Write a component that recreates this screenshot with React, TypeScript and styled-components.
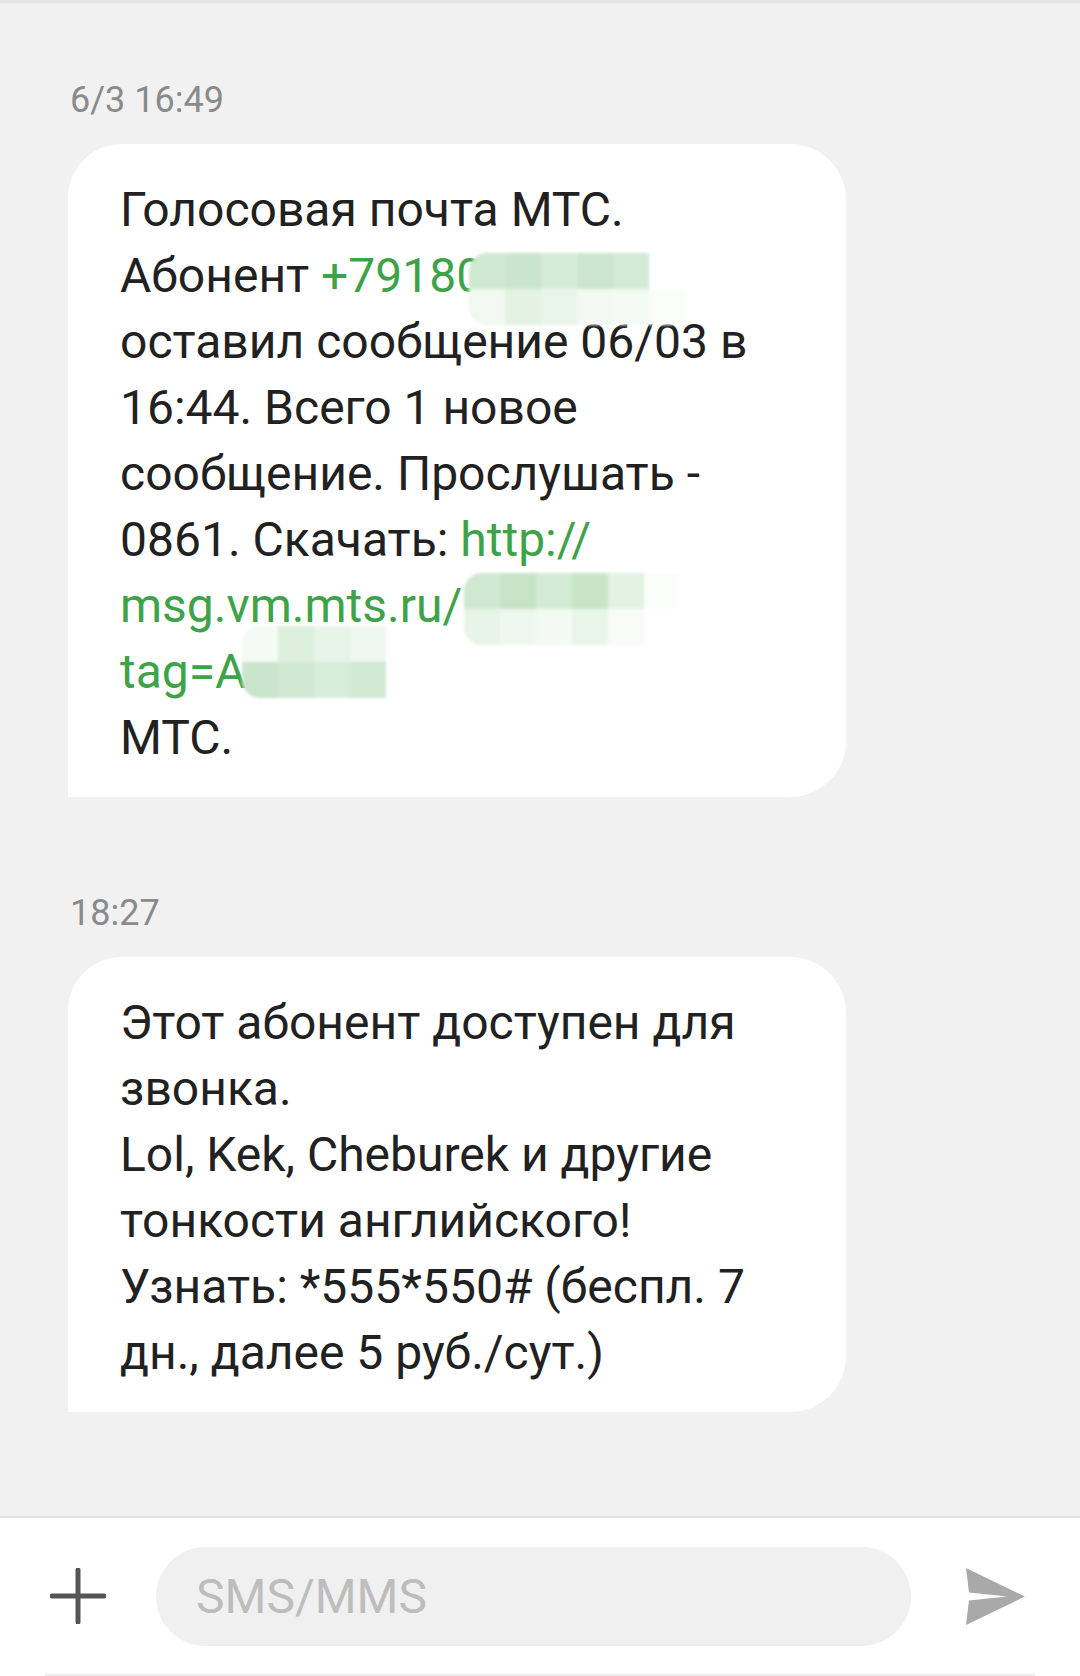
import React from 'react';
import styled, { createGlobalStyle } from 'styled-components';

const GlobalStyle = createGlobalStyle`
  html, body {
    margin: 0;
    padding: 0;
    background: #f1f1f1;
  }
  body {
    font-family: Roboto, "Noto Sans", "Liberation Sans", sans-serif;
  }
`;

const Screen = styled.div`
  width: 1080px;
  height: 1676px;
  display: flex;
  flex-direction: column;
  border-top: 3px solid #e4e4e4;
  box-sizing: border-box;
  background: #f1f1f1;
`;

const Thread = styled.div`
  flex: 1;
  display: flex;
  flex-direction: column;
  padding: 79px 0 0 68px;
`;

const Stamp = styled.div<{ $gapTop?: number }>`
  margin-top: ${p => p.$gapTop || 0}px;
  padding-left: 2px;
  font-size: 36px;
  line-height: 36px;
  color: #8a8a8a;
`;

const Bubble = styled.div`
  margin-top: 26px;
  width: 778px;
  box-sizing: border-box;
  padding: 33px 20px 26px 52px;
  background: #fff;
  border-radius: 54px 56px 56px 0;
  font-size: 48px;
  line-height: 66px;
  color: #212121;
`;

const Line = styled.div`
  white-space: nowrap;
  height: 66px;
`;

const Link = styled.span`
  color: #3ea348;
`;

const Censor = styled.span<{ $cols: number; $shift: number; $drop: number }>`
  display: inline-grid;
  grid-template-columns: repeat(${p => p.$cols}, 36px);
  grid-auto-rows: 36px;
  vertical-align: top;
  position: relative;
  top: ${p => p.$drop}px;
  margin-left: ${p => p.$shift}px;
  margin-bottom: -40px;
  filter: blur(1.5px);
  border-radius: 18px 4px 14px 18px;
  overflow: hidden;
`;

const Cell = styled.span<{ $c: string }>`
  background: ${p => p.$c};
`;

const BottomBar = styled.div`
  height: 160px;
  flex-shrink: 0;
  background: #fff;
  border-top: 2px solid #e2e2e2;
  box-sizing: border-box;
  display: flex;
  align-items: center;
`;

const Composer = styled.div`
  flex: 1;
  display: flex;
  align-items: center;
  height: 100%;
  margin: 0 45px;
  border-bottom: 2px solid #ececec;
  box-sizing: border-box;
`;

const IconButton = styled.div<{ $w: number; $pad?: number }>`
  width: ${p => p.$w}px;
  padding-left: ${p => p.$pad || 0}px;
  box-sizing: border-box;
  display: flex;
  align-items: center;
  justify-content: ${p => (p.$pad ? 'flex-start' : 'center')};
  flex-shrink: 0;
`;

const Field = styled.div`
  flex: 1;
  height: 99px;
  margin-left: 45px;
  border-radius: 50px;
  background: #f0f0f0;
  display: flex;
  align-items: center;
  padding-left: 40px;
  font-size: 48px;
  color: #bdbdbd;
`;

const mosaic = (colors: string[]) => colors.map((c, i) => <Cell key={i} $c={c} />);

const App: React.FC = () => {
  return (
    <Screen>
      <GlobalStyle />
      <Thread>
        <Stamp>6/3 16:49</Stamp>
        <Bubble>
          <Line>Голосовая почта МТС.</Line>
          <Line>
            Абонент <Link>+79180</Link>
            <Censor $cols={6} $shift={-14} $drop={10}>
              {mosaic([
                '#cfe8d0', '#c9e5cb', '#d6ecd7', '#cbe6cc', '#d3ead4', '#ffffff',
                '#f0f8f0', '#e4f2e4', '#eaf5ea', '#f2f9f2', '#f4faf4', '#fafdfa',
              ])}
            </Censor>
          </Line>
          <Line>оставил сообщение 06/03 в</Line>
          <Line>16:44. Всего 1 новое</Line>
          <Line>сообщение. Прослушать -</Line>
          <Line>
            0861. Скачать: <Link>http://</Link>
          </Line>
          <Line>
            <Link>msg.vm.mts.ru/</Link>
            <Censor $cols={6} $shift={2} $drop={0}>
              {mosaic([
                '#cfe8d0', '#c6e3c8', '#d3ebd4', '#c8e4c9', '#e3f1e3', '#fbfdfb',
                '#e8f4e8', '#eef7ee', '#f3f9f3', '#e9f5e9', '#f8fbf8', '#ffffff',
              ])}
            </Censor>
          </Line>
          <Line>
            <Link>tag=A</Link>
            <Censor $cols={5} $shift={-4} $drop={-13}>
              {mosaic([
                '#f4faf4', '#dcefdc', '#e8f4e8', '#eef7ee', '#ffffff',
                '#c9e5cb', '#d0e8d1', '#d8edd9', '#d2e9d3', '#ffffff',
              ])}
            </Censor>
          </Line>
          <Line>МТС.</Line>
        </Bubble>

        <Stamp $gapTop={98}>18:27</Stamp>
        <Bubble>
          <Line>Этот абонент доступен для</Line>
          <Line>звонка.</Line>
          <Line>Lol, Kek, Cheburek и другие</Line>
          <Line>тонкости английского!</Line>
          <Line>Узнать: *555*550# (беспл. 7</Line>
          <Line>дн., далее 5 руб./сут.)</Line>
        </Bubble>
      </Thread>

      <BottomBar>
        <Composer>
          <IconButton $w={66}>
            <svg width="56" height="56" viewBox="0 0 56 56">
              <path d="M28 2 V54 M2 28 H54" stroke="#555" strokeWidth="5" strokeLinecap="round" />
            </svg>
          </IconButton>
          <Field>SMS/MMS</Field>
          <IconButton $w={124} $pad={55}>
            <svg width="59" height="57" viewBox="0 0 60 58">
              <path d="M0 0 L60 29 L0 58 L3 33 L42 29 L3 25 Z" fill="#a9a9a9" />
            </svg>
          </IconButton>
        </Composer>
      </BottomBar>
    </Screen>
  );
};

export default App;
